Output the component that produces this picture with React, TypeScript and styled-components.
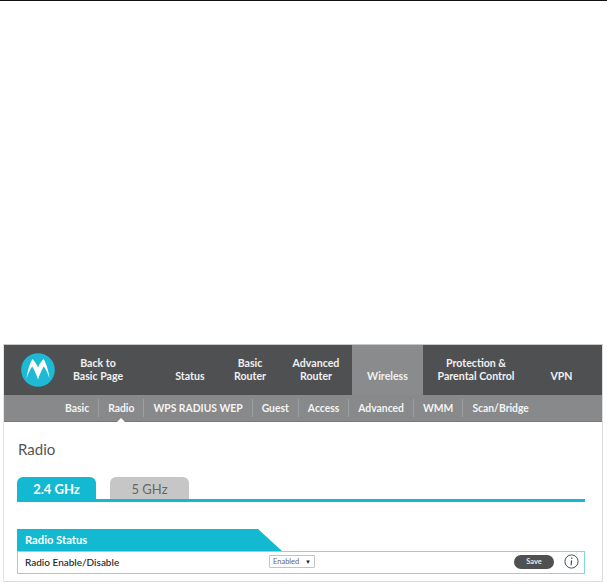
import React from "react";
import styled, { createGlobalStyle } from "styled-components";

const Global = createGlobalStyle`
  html, body { margin: 0; padding: 0; background: #fff; }
  body { font-family: Lato, "Noto Sans", "Liberation Sans", sans-serif; }
  * { box-sizing: border-box; }
`;

const Page = styled.div`
  width: 607px;
  height: 583px;
  overflow: hidden;
  border-top: 1px solid #111;
`;

const Panel = styled.div`
  width: 600px;
  height: 238px;
  margin: 343px 0 0 3px;
  border: 1px solid #dcdcdc;
  border-top-color: #c9c9c9;
  border-left-color: #e6e6e6;
  display: flex;
  flex-direction: column;
`;

const MainNav = styled.nav`
  height: 50px;
  background: #4f5052;
  display: flex;
`;

const LogoCell = styled.div`
  width: 58px;
  display: flex;
  align-items: center;
  padding-left: 17px;
`;

const NavItem = styled.div<{ $w: number; $pad?: number; $active?: boolean }>`
  width: ${(p) => p.$w}px;
  padding-left: ${(p) => p.$pad ?? 0}px;
  padding-bottom: 12px;
  display: flex;
  align-items: flex-end;
  justify-content: center;
  text-align: center;
  color: #f0f0f0;
  font-size: 10.6px;
  font-weight: 700;
  line-height: 13px;
  background: ${(p) => (p.$active ? "#898b8c" : "transparent")};
`;

const SubNav = styled.nav`
  height: 27px;
  background: #87898a;
  display: flex;
  align-items: center;
  padding-left: 52px;
  border-bottom: 1px solid #77797a;
`;

const SubItem = styled.div<{ $last?: boolean; $active?: boolean }>`
  position: relative;
  height: 18px;
  padding: 0 9px;
  display: flex;
  align-items: center;
  color: #f4f4f4;
  font-size: 10.35px;
  font-weight: 700;
  white-space: nowrap;
  border-right: ${(p) => (p.$last ? "none" : "1px solid #9c9e9f")};
  ${(p) =>
    p.$active &&
    `&::after {
      content: "";
      position: absolute;
      left: 50%;
      bottom: -5px;
      margin-left: -4px;
      border-left: 4px solid transparent;
      border-right: 4px solid transparent;
      border-bottom: 4px solid #fff;
    }`}
`;

const Content = styled.main`
  flex: 1;
  padding: 18px 17px 0 13px;
  display: flex;
  flex-direction: column;
`;

const Title = styled.h1`
  margin: 0 0 0 1px;
  font-size: 15px;
  line-height: 18px;
  font-weight: 400;
  color: #555;
`;

const Tabs = styled.div`
  margin-top: 19px;
  height: 25px;
  display: flex;
  gap: 14px;
  border-bottom: 3px solid #13b9d1;
`;

const Tab = styled.div<{ $active?: boolean }>`
  width: 79px;
  height: 22px;
  padding-top: 1px;
  border-radius: 6px 6px 0 0;
  display: flex;
  align-items: center;
  justify-content: center;
  font-size: 13px;
  background: ${(p) => (p.$active ? "#13b9d1" : "#c6c6c6")};
  color: ${(p) => (p.$active ? "#fff" : "#666")};
  font-weight: ${(p) => (p.$active ? 700 : 400)};
`;

const SectionHead = styled.div`
  margin-top: 27px;
  width: 265px;
  height: 22px;
  padding: 0 0 1px 8px;
  display: flex;
  align-items: center;
  background: #13b9d1;
  color: #fff;
  font-size: 11.2px;
  font-weight: 700;
  clip-path: polygon(0 0, 241px 0, 100% 100%, 0 100%);
`;

const Row = styled.div`
  height: 23px;
  display: flex;
  align-items: center;
  padding: 0 5px 2px 7px;
  border: 1px solid #7fd9e4;
`;

const RowLabel = styled.div`
  width: 244px;
  font-size: 10px;
  font-weight: 500;
  color: #222;
`;

const FakeSelect = styled.div`
  width: 46px;
  height: 13px;
  display: flex;
  align-items: center;
  justify-content: space-between;
  padding: 0 3px;
  border: 1px solid #c4c4c4;
  border-radius: 1px;
  font-size: 7.5px;
  color: #666;
`;

const Caret = styled.span`
  font-size: 6px;
  color: #222;
`;

const SaveButton = styled.div`
  margin-left: auto;
  width: 40px;
  height: 14px;
  border-radius: 7px;
  background: #4f5052;
  color: #e8e8e8;
  font-size: 7.5px;
  font-weight: 700;
  display: flex;
  align-items: center;
  justify-content: center;
`;

const InfoIcon = styled.svg`
  margin-left: 10px;
  width: 15px;
  height: 15px;
`;

const items = ["Basic", "Radio", "WPS RADIUS WEP", "Guest", "Access", "Advanced", "WMM", "Scan/Bridge"];

export default function App() {
  return (
    <Page>
      <Global />
      <Panel>
        <MainNav>
          <LogoCell>
            <svg width="34" height="34" viewBox="0 0 34 34">
              <circle cx="17" cy="17" r="16.8" fill="#1db9d5" />
              <path
                d="M5.5 25.5 C6.5 18 8.5 10.5 11.5 6 C13.8 8.5 15.8 11.5 17 14.5 C18.2 11.5 20.2 8.5 22.5 6 C25.5 10.5 27.5 18 28.5 25.5 C26.8 20.5 24.8 16 22.8 13.5 C20.6 17 18.6 21.5 17 26.5 C15.4 21.5 13.4 17 11.2 13.5 C9.2 16 7.2 20.5 5.5 25.5 Z"
                fill="#fff"
              />
            </svg>
          </LogoCell>
          <NavItem $w={72}>Back to<br />Basic Page</NavItem>
          <NavItem $w={86} $pad={26}>Status</NavItem>
          <NavItem $w={60}>Basic<br />Router</NavItem>
          <NavItem $w={72}>Advanced<br />Router</NavItem>
          <NavItem $w={71} $active>Wireless</NavItem>
          <NavItem $w={106}>Protection &amp;<br />Parental Control</NavItem>
          <NavItem $w={65}>VPN</NavItem>
        </MainNav>
        <SubNav>
          {items.map((t, i) => (
            <SubItem key={t} $active={t === "Radio"} $last={i === items.length - 1}>{t}</SubItem>
          ))}
        </SubNav>
        <Content>
          <Title>Radio</Title>
          <Tabs>
            <Tab $active>2.4 GHz</Tab>
            <Tab>5 GHz</Tab>
          </Tabs>
          <SectionHead>Radio Status</SectionHead>
          <Row>
            <RowLabel>Radio Enable/Disable</RowLabel>
            <FakeSelect>Enabled <Caret>▼</Caret></FakeSelect>
            <SaveButton>Save</SaveButton>
            <InfoIcon viewBox="0 0 15 15">
              <circle cx="7.5" cy="7.5" r="6.6" fill="none" stroke="#3d5560" strokeWidth="1" />
              <path d="M7.8 3.6v1.4M7.6 6.4 L7.1 11.2" stroke="#3d5560" strokeWidth="1.2" fill="none" />
            </InfoIcon>
          </Row>
        </Content>
      </Panel>
    </Page>
  );
}
